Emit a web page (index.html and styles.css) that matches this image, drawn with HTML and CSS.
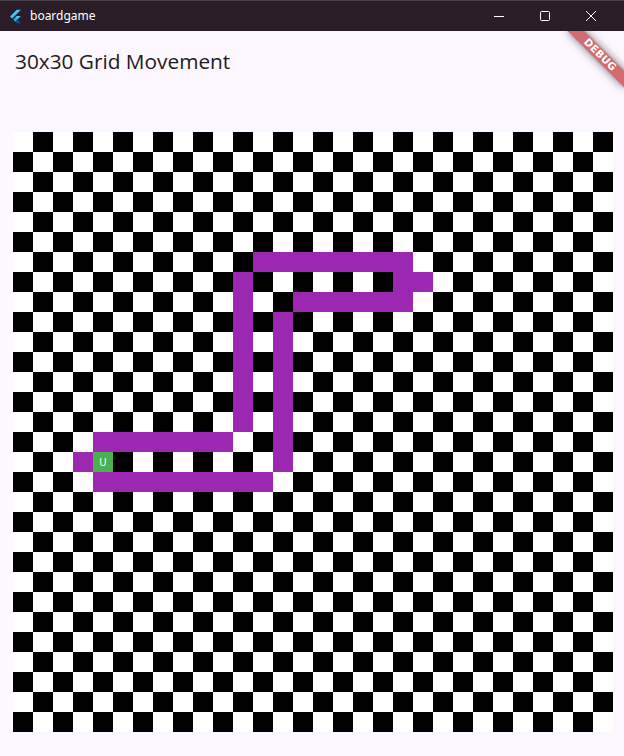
FILE: index.html
```html
<!DOCTYPE html>
<html>
<head>
<meta charset="utf-8">
<link rel="stylesheet" href="styles.css">
</head>
<body>
<div class="titlebar">
  <div class="tb-left">
    <svg class="flutter-logo" viewBox="0 0 166 202" width="13" height="15">
      <path fill="#47c5fb" d="M37.7 128.9L9.8 101 100.4 10.4h55.8z"/>
      <path fill="#47c5fb" d="M156.2 94h-55.8L79.5 114.9l27.9 27.9z"/>
      <path fill="#00569e" d="M79.5 170.7l20.9 20.9h55.8l-48.8-48.8z"/>
      <path fill="#00b5f8" d="M51.6 142.8l27.9-27.9 27.9 27.9-27.9 27.9z"/>
    </svg>
    <span class="tb-title">boardgame</span>
  </div>
  <div class="tb-controls">
    <div class="tb-btn">
      <svg width="12" height="12" viewBox="0 0 12 12"><path d="M1 6.5h10" stroke="#fff" stroke-width="1"/></svg>
    </div>
    <div class="tb-btn">
      <svg width="12" height="12" viewBox="0 0 12 12"><rect x="1.5" y="1.5" width="9" height="9" rx="1" fill="none" stroke="#fff" stroke-width="1"/></svg>
    </div>
    <div class="tb-btn">
      <svg width="12" height="12" viewBox="0 0 12 12"><path d="M1 1l10 10M11 1L1 11" stroke="#fff" stroke-width="1"/></svg>
    </div>
  </div>
</div>
<div class="app">
  <header class="appbar"><h1 class="title">30x30 Grid Movement</h1></header>
  <main class="content">
    <div class="board">
      <div class="path" style="grid-area: 7 / 13 / 8 / 21"></div>
      <div class="path" style="grid-area: 8 / 20 / 9 / 22"></div>
      <div class="path" style="grid-area: 9 / 15 / 10 / 21"></div>
      <div class="path" style="grid-area: 8 / 12 / 16 / 13"></div>
      <div class="path" style="grid-area: 10 / 14 / 18 / 15"></div>
      <div class="path" style="grid-area: 16 / 5 / 17 / 12"></div>
      <div class="path" style="grid-area: 17 / 4 / 18 / 5"></div>
      <div class="path" style="grid-area: 18 / 5 / 19 / 14"></div>
      <div class="player" style="grid-area: 17 / 5 / 18 / 6">U</div>
    </div>
  </main>
  <div class="debug-banner">DEBUG</div>
</div>
</body>
</html>
```
FILE: styles.css
```css
* { box-sizing: border-box; }
html, body {
  margin: 0;
  padding: 0;
  width: 624px;
  height: 756px;
  overflow: hidden;
  background: #fdf7ff;
  font-family: "Open Sans", "Noto Sans", sans-serif;
}
.titlebar {
  height: 31px;
  background: #2a1d28;
  border-top: 1px solid #4a4048;
  display: flex;
  align-items: center;
  justify-content: space-between;
}
.tb-left {
  display: flex;
  align-items: center;
  padding-left: 9px;
  gap: 8px;
}
.flutter-logo { display: block; }
.tb-title {
  color: #ffffff;
  font-size: 12px;
  font-family: "Noto Sans", "Open Sans", sans-serif;
  margin-top: -1px;
}
.tb-controls {
  display: flex;
  height: 100%;
  padding-right: 10px;
}
.tb-btn {
  width: 46px;
  display: flex;
  align-items: center;
  justify-content: center;
}
.app {
  position: relative;
  height: 725px;
  overflow: hidden;
}
.appbar {
  height: 56px;
  display: flex;
  align-items: center;
  padding-left: 15px;
}
.title {
  margin: 0;
  font-weight: 400;
  font-size: 20.8px;
  color: #1d1b20;
  font-family: "Open Sans", "Noto Sans", sans-serif;
  padding-top: 4px;
}
.content {
  padding: 45px 0 0 13px;
}
.board {
  width: 600px;
  height: 600px;
  display: grid;
  grid-template-columns: repeat(30, 20px);
  grid-template-rows: repeat(30, 20px);
  background: repeating-conic-gradient(#000 0 25%, #fff 0 50%) 0 0 / 40px 40px;
}
.path { background: #9c27b0; }
.player {
  background: #4caf50;
  color: #ffffff;
  font-size: 10px;
  display: flex;
  align-items: center;
  justify-content: center;
  font-family: "Noto Sans", sans-serif;
}
.debug-banner {
  position: absolute;
  left: 544px;
  top: 18px;
  width: 80px;
  height: 12px;
  transform-origin: 40px 6px;
  transform: translate(16px, 0) rotate(45deg);
  background: rgba(183, 28, 28, 0.63);
  box-shadow: 0 0 8px rgba(0, 0, 0, 0.5);
  color: #fff;
  font-size: 10.2px;
  font-weight: 900;
  line-height: 12px;
  text-align: center;
  letter-spacing: 0.3px;
  font-family: "DejaVu Sans", sans-serif;
}
```
